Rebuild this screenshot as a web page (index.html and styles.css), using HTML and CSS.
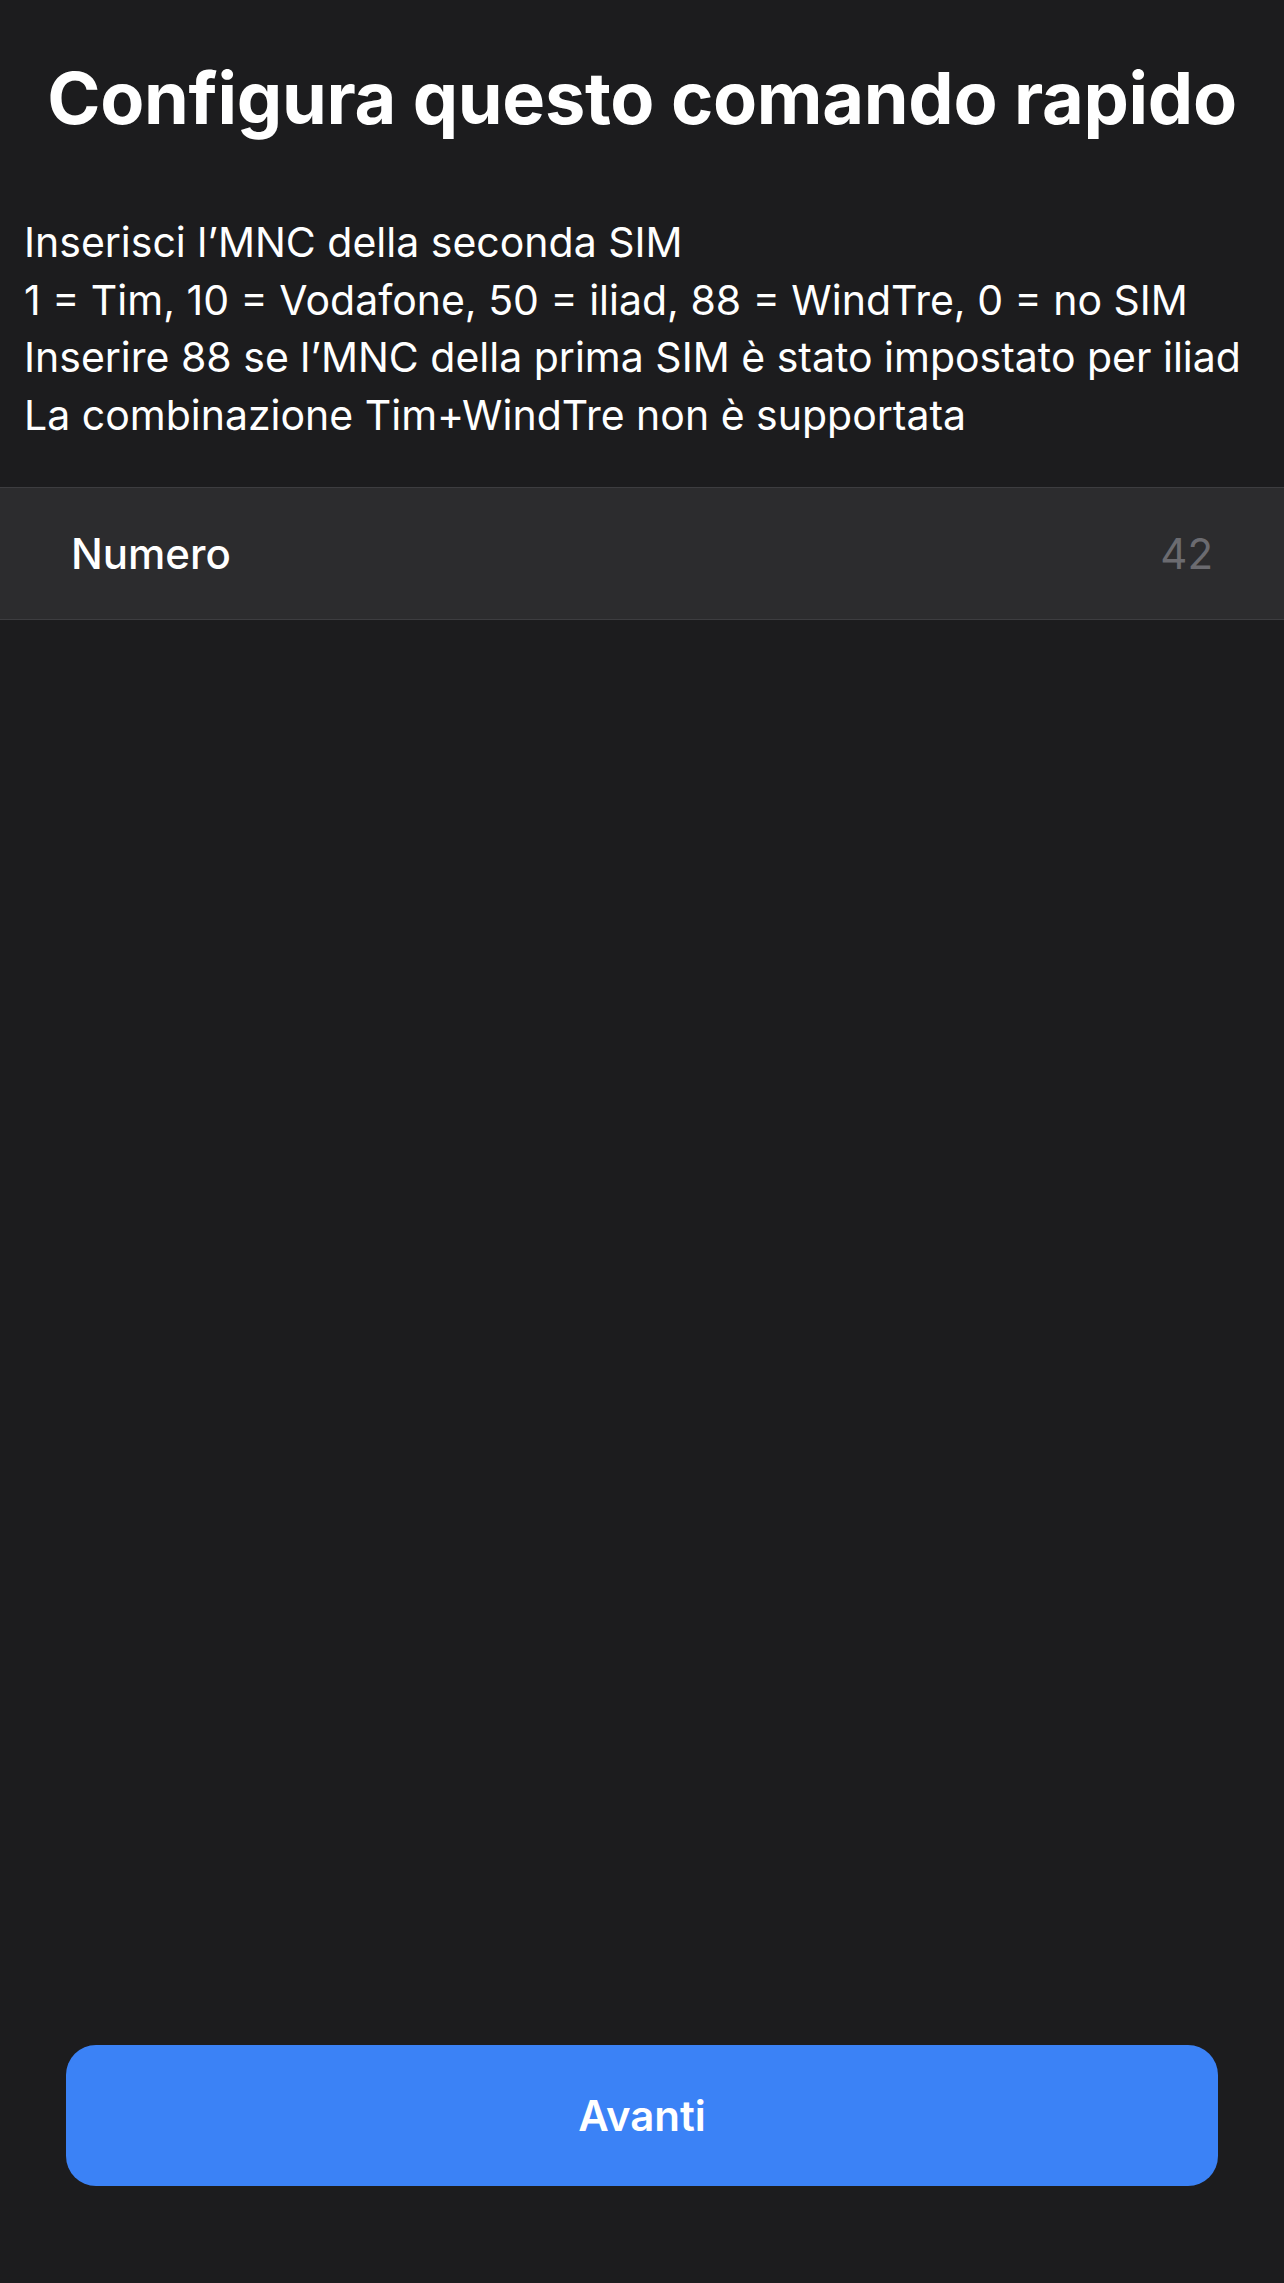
FILE: index.html
```html
<!DOCTYPE html>
<html lang="it">
<head>
<meta charset="utf-8">
<title>Configura questo comando rapido</title>
<link rel="stylesheet" href="styles.css">
</head>
<body>
<main class="screen">
  <h1 class="title">Configura questo comando rapido</h1>
  <div class="description">
    <p>Inserisci l’MNC della seconda SIM</p>
    <p>1 = Tim, 10 = Vodafone, 50 = iliad, 88 = WindTre, 0 = no SIM</p>
    <p>Inserire 88 se l’MNC della prima SIM è stato impostato per iliad</p>
    <p>La combinazione Tim+WindTre non è supportata</p>
  </div>
  <div class="field-row">
    <span class="field-label">Numero</span>
    <span class="field-value">42</span>
  </div>
  <div class="footer">
    <button class="primary-btn" type="button">Avanti</button>
  </div>
</main>
</body>
</html>
```

FILE: styles.css
```css
* {
  box-sizing: border-box;
}

html, body {
  margin: 0;
  padding: 0;
  background: #1c1c1e;
}

body {
  font-family: Inter, "Noto Sans", "Liberation Sans", sans-serif;
  color: #ffffff;
  -webkit-font-smoothing: antialiased;
}

.screen {
  min-height: 2283px;
  display: flex;
  flex-direction: column;
}

.title {
  margin: 55px 0 0;
  font-size: 72px;
  line-height: 86px;
  font-weight: 700;
  text-align: center;
  letter-spacing: -0.3px;
}

.description {
  margin-top: 73px;
  padding: 0 24px;
  font-size: 41px;
  line-height: 57.5px;
  font-weight: 400;
}

.description p {
  margin: 0;
}

.field-row {
  margin-top: 43px;
  height: 133px;
  background: #2c2c2e;
  border-top: 1px solid #3d3d40;
  border-bottom: 1px solid #3d3d40;
  display: flex;
  align-items: center;
  justify-content: space-between;
  padding: 0 71px 0 71px;
  font-size: 42px;
}

.field-label {
  color: #ffffff;
  font-weight: 500;
}

.field-value {
  color: #6b6b70;
}

.footer {
  margin-top: auto;
  padding: 0 66px 97px;
}

.primary-btn {
  display: block;
  width: 100%;
  height: 141px;
  border: none;
  border-radius: 30px;
  background: #3b82f6;
  color: #ffffff;
  font-family: Inter, "Noto Sans", "Liberation Sans", sans-serif;
  font-size: 42px;
  font-weight: 600;
}
```
